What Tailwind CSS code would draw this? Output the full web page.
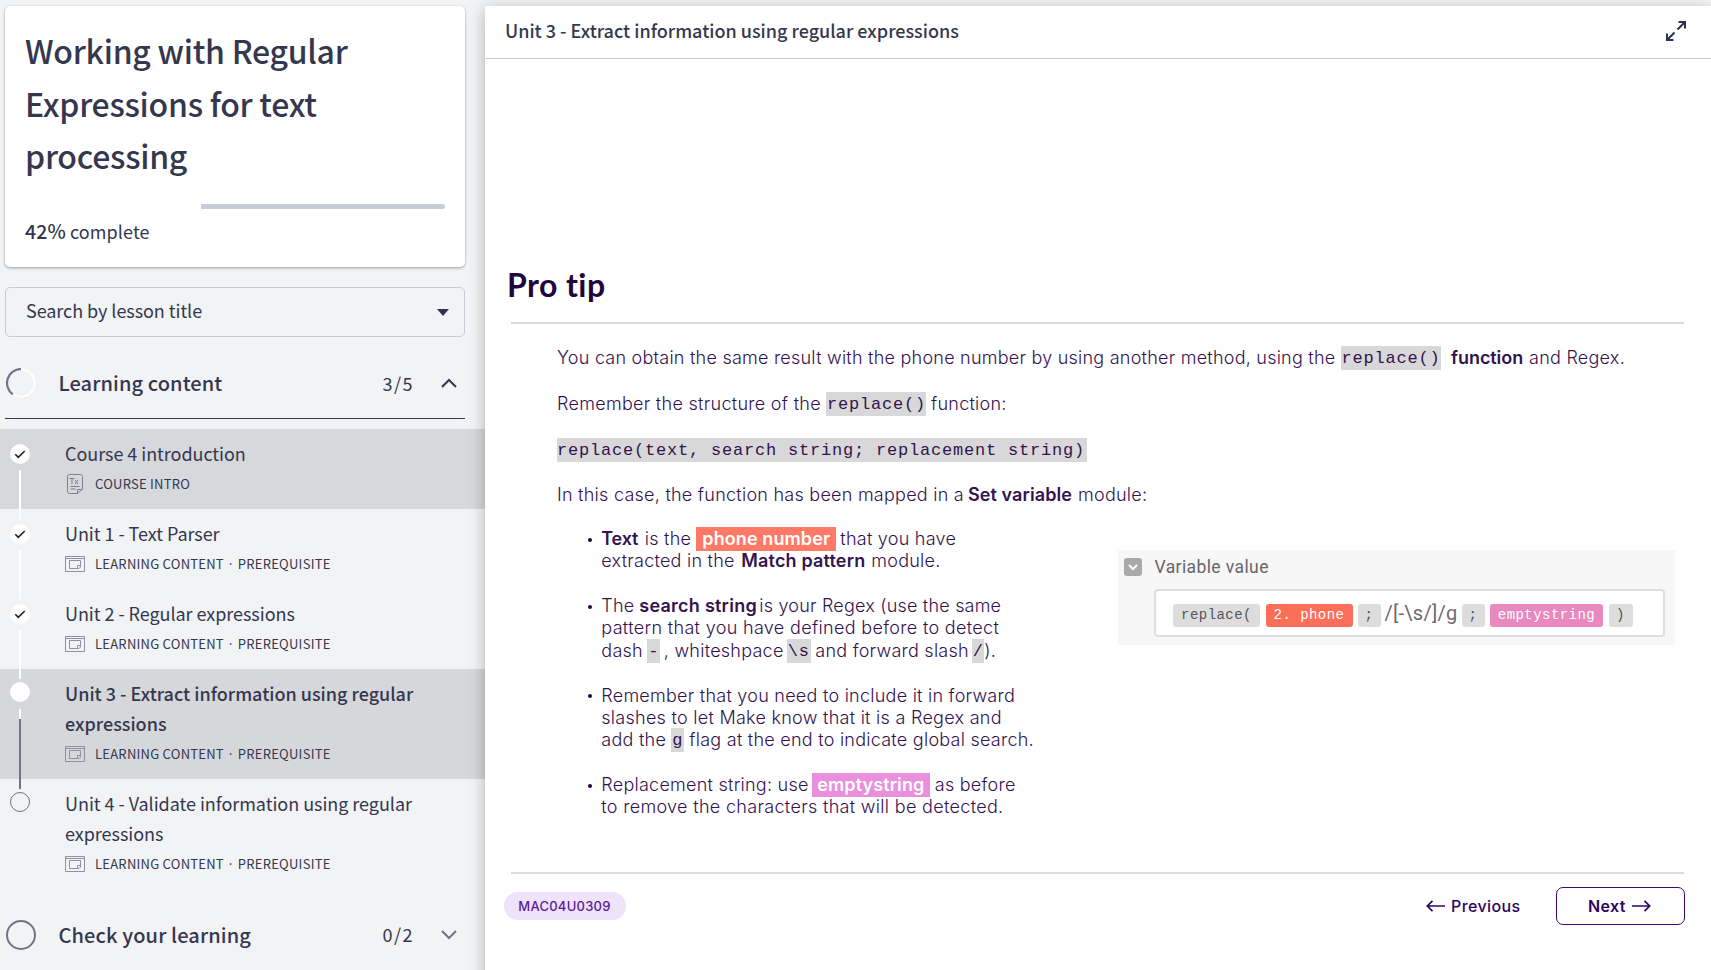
<!DOCTYPE html>
<html lang="en">
<head>
<meta charset="utf-8">
<title>Working with Regular Expressions for text processing</title>
<script src="https://cdn.jsdelivr.net/npm/@tailwindcss/browser@4"></script>
</head>
<body class="h-[970px] w-[1711px] overflow-hidden bg-[#f1f3f5] font-['Noto_Sans_CJK_JP',sans-serif] text-[#35374f]">
<svg class="hidden">
  <symbol id="lesson" viewBox="0 0 20 16"><g fill="none" stroke="#8e90a5"><path d="M.5.5h19v15H.5zM.5 2.5h19"/><path d="M12.500 12.500h-8v-8h11v5.500M12.500 12.500h1.500L15.500 11v-1.500h-3v3"/></g></symbol>
</svg>
<div class="flex h-full">
  <aside class="flex w-[485px] shrink-0 flex-col pt-1.5">
    <section class="ml-[5px] h-[261px] w-[460px] shrink-0 rounded-[5px] bg-white px-5 pt-[18px] shadow-[0_1px_3px_rgba(0,0,0,0.35)]">
      <h1 class="text-[32px] leading-[52.5px] font-medium tracking-[-0.27px] whitespace-nowrap">Working with Regular<br>Expressions for text<br>processing</h1>
      <div class="mt-[22.500px] h-[5px] pl-[176px]"><div class="h-full w-[244px] rounded-r-[3px] bg-[#c9cbd6]"></div></div>
      <p class="mt-[7px] text-[18px] leading-[30px] tracking-[0.1px]"><span class="text-[19.5px] font-medium">42%</span> complete</p>
    </section>
    <div class="mt-5 ml-[5px] flex h-[50px] w-[460px] shrink-0 items-center justify-between rounded-[5px] border border-[#c9cbd9] pr-[15px] pl-5">
      <span class="pb-[4px] text-[18px] leading-[30px] tracking-[-0.06px]">Search by lesson title</span>
      <svg class="h-[7px] w-3" viewBox="0 0 12 7"><path d="M0 0h12L6 7z" fill="#2f3150"/></svg>
    </div>
    <div class="ml-[5px] flex h-[82px] w-[460px] shrink-0 items-center border-b border-[#35375a] pt-[11px]">
      <svg class="ml-[1px] h-[30px] w-[30px]" viewBox="0 0 30 30" fill="none"><circle cx="15" cy="15" r="14.500" stroke="#c9cbd3" stroke-width=".8" stroke-dasharray="2 1.500"/><circle cx="15" cy="15" r="13.800" stroke="#fff" stroke-width="2.200"/><path d="M15 1A14 14 0 0 0 6.800 26.300" stroke="#6f7388" stroke-width="2.200"/></svg>
      <h2 class="ml-[22.500px] w-[324px] pb-[1px] text-[20px] leading-[30px] font-medium tracking-[0.1px]">Learning content</h2>
      <span class="w-[58px] pb-[1px] text-[18px] leading-[30px] tracking-[1.500px]">3/5</span>
      <svg class="h-2.5 w-4" viewBox="0 0 16 10" fill="none" stroke="#35374f" stroke-width="2"><path d="M1 9 8 2l7 7"/></svg>
    </div>
    <ul class="mt-2.5 text-[18px] leading-[30px]">
      <li class="relative z-50 flex h-20 bg-[#d6d8db] pt-[9px]">
        <div class="ml-2.5 w-[55px] shrink-0 pt-1.5"><svg class="h-5 w-5" viewBox="0 0 20 20"><circle cx="10" cy="10" r="10" fill="#fff"/><path d="m5.300 10.300 3 3L14.700 7" fill="none" stroke="#222" stroke-width="1.600"/></svg></div>
        <i class="absolute top-[41px] left-[19px] h-[49px] w-0.5 bg-white"></i>
        <div><p class="tracking-[-0.05px]">Course 4 introduction</p>
        <div class="mt-[6px] flex h-5 items-center text-[13px] tracking-[0.25px]"><svg class="ml-0.5 h-5 w-4" viewBox="0 0 16 20" fill="none" stroke="#7b8096"><path d="M10.500 19.500h-8a2 2 0 0 1-2-2v-15a2 2 0 0 1 2-2h11a2 2 0 0 1 2 2v12.500zM10.500 19.500v-4h5M2.500 4.500h5M5 4.500V10M8 6l3 4M11 6 8 10M3.500 12.500h9M3.500 15h5"/></svg><span class="ml-3">COURSE INTRO</span></div></div>
      </li>
      <li class="relative z-40 flex h-20 pt-[9px]">
        <div class="ml-2.5 w-[55px] shrink-0 pt-1.5"><svg class="h-5 w-5" viewBox="0 0 20 20"><circle cx="10" cy="10" r="10" fill="#fff"/><path d="m5.300 10.300 3 3L14.700 7" fill="none" stroke="#222" stroke-width="1.600"/></svg></div>
        <i class="absolute top-[41px] left-[19px] h-[49px] w-0.5 bg-white"></i>
        <div><p class="tracking-[-0.05px]">Unit 1 - Text Parser</p>
        <div class="mt-[6px] flex h-5 items-center text-[13px] tracking-[0.25px]"><svg class="h-4 w-5"><use href="#lesson"/></svg><span class="ml-2.5">LEARNING CONTENT · PREREQUISITE</span></div></div>
      </li>
      <li class="relative z-30 flex h-20 pt-[9px]">
        <div class="ml-2.5 w-[55px] shrink-0 pt-1.5"><svg class="h-5 w-5" viewBox="0 0 20 20"><circle cx="10" cy="10" r="10" fill="#fff"/><path d="m5.300 10.300 3 3L14.700 7" fill="none" stroke="#222" stroke-width="1.600"/></svg></div>
        <i class="absolute top-[41px] left-[19px] h-[49px] w-0.5 bg-white"></i>
        <div><p class="tracking-[-0.05px]">Unit 2 - Regular expressions</p>
        <div class="mt-[6px] flex h-5 items-center text-[13px] tracking-[0.25px]"><svg class="h-4 w-5"><use href="#lesson"/></svg><span class="ml-2.5">LEARNING CONTENT · PREREQUISITE</span></div></div>
      </li>
      <li class="relative z-20 flex h-[110px] bg-[#d6d7db] pt-[9px]">
        <div class="ml-2.5 w-[55px] shrink-0 pt-1"><div class="h-5 w-5 rounded-full bg-white"></div></div>
        <i class="absolute top-[40px] left-[19px] h-[80px] w-0.5 border-t-[10px] border-white bg-[#6f7388]"></i>
        <div><p class="font-medium whitespace-nowrap">Unit 3 - Extract information using regular<br>expressions</p>
        <div class="mt-[6px] flex h-5 items-center text-[13px] tracking-[0.25px]"><svg class="h-4 w-5"><use href="#lesson"/></svg><span class="ml-2.5">LEARNING CONTENT · PREREQUISITE</span></div></div>
      </li>
      <li class="flex h-[110px] pt-[9px]">
        <div class="ml-2.5 w-[55px] shrink-0 pt-1"><div class="h-5 w-5 rounded-full border border-[#6f7388]"></div></div>
        <div><p class="tracking-[-0.04px] whitespace-nowrap">Unit 4 - Validate information using regular<br>expressions</p>
        <div class="mt-[6px] flex h-5 items-center text-[13px] tracking-[0.25px]"><svg class="h-4 w-5"><use href="#lesson"/></svg><span class="ml-2.5">LEARNING CONTENT · PREREQUISITE</span></div></div>
      </li>
    </ul>
    <div class="ml-[5px] flex h-[92px] w-[460px] shrink-0 items-center">
      <div class="ml-[1px] h-[30px] w-[30px] shrink-0 rounded-full border-2 border-[#6f7388]"></div>
      <h2 class="ml-[22.500px] w-[324px] pb-[1px] text-[20px] leading-[30px] font-medium tracking-[0.13px]">Check your learning</h2>
      <span class="w-[58px] pb-[2px] text-[18px] leading-[30px] tracking-[1.500px]">0/2</span>
      <svg class="h-2.5 w-4" viewBox="0 0 16 10" fill="none" stroke="#6f7388" stroke-width="2"><path d="m1 1 7 7 7-7"/></svg>
    </div>
  </aside>

  <main class="relative z-[60] mt-1.5 flex h-[980px] w-[1226px] shrink-0 flex-col bg-white shadow-[0_4px_15px_rgba(0,0,0,0.28)]">
    <header class="flex h-[53px] shrink-0 items-center justify-between border-b border-[#c9cbd9] pr-[25px] pl-5">
      <span class="pb-[5px] text-[18px] leading-[30px] font-medium">Unit 3 - Extract information using regular expressions</span>
      <svg class="mb-[3px] h-5 w-5" viewBox="0 0 20 20" fill="none" stroke="#2f3150" stroke-width="2"><path d="M12.500 1H19v6.500M19 1l-7.500 7.500M7.500 19H1v-6.500M1 19l7.500-7.500"/></svg>
    </header>
    <article class="flex flex-col font-[Inter,sans-serif] text-[18px] leading-[22.33px] font-light tracking-[0.25px] text-[#33124f]">
      <h1 class="mt-[206px] ml-[22px] font-[Lato,sans-serif] text-[32px] leading-[40px] font-bold tracking-[0.45px] text-[#22053d] [font-variant-ligatures:none]">Pro tip</h1>
      <div class="mt-[17px] ml-[26px] h-0.5 w-[1173px] bg-[#dfd9dc]"></div>
      <div class="mt-[22px] ml-[72px] flex h-6 items-center whitespace-nowrap">
        <span class="w-[783.500px] tracking-[0.235px]">You can obtain the same result with the phone number by using another method, using the</span>
        <code class="mr-[10.500px] h-6 w-[100px] bg-[#d8d8d8] pl-[1px] font-['Liberation_Mono',monospace] text-[17px] leading-[26px] font-normal tracking-[0.8px]">replace()</code>
        <b class="w-[78px] font-semibold tracking-[-0.05px]">function</b><span>and Regex.</span>
      </div>
      <div class="mt-[22px] ml-[72px] flex h-6 items-center whitespace-nowrap">
        <span class="w-[269px] tracking-[0.29px]">Remember the structure of the</span>
        <code class="mr-[5px] h-6 w-[100px] bg-[#d8d8d8] pl-[1px] font-['Liberation_Mono',monospace] text-[17px] leading-[26px] font-normal tracking-[0.8px]">replace()</code>
        <span>function:</span>
      </div>
      <code class="mt-[22px] ml-[72px] h-6 w-[530px] bg-[#d8d8d8] font-['Liberation_Mono',monospace] text-[17px] leading-[26px] font-normal tracking-[0.8px] whitespace-nowrap">replace(text, search string; replacement string)</code>
      <div class="mt-[21px] ml-[72px] flex h-6 items-center whitespace-nowrap">
        <span class="w-[411px]">In this case, the function has been mapped in a</span><b class="w-[110px] font-semibold tracking-[0.09px]">Set variable</b><span>module:</span>
      </div>
      <div class="mt-[21px] flex">
        <ul class="ml-[103px] w-[530px] [&_li]:relative [&_li]:mb-[22.33px] [&_li]:pl-[13.3px] [&_p]:flex [&_p]:h-[22.33px] [&_p]:items-center [&_p]:whitespace-nowrap">
          <li><i class="absolute top-[10px] left-0 h-1 w-1 rounded-full bg-[#22053d]"></i>
            <p><b class="w-[43.500px] font-semibold tracking-[-0.2px]">Text</b><span class="w-[51.500px]">is the</span><mark class="mr-1 h-6 w-[140px] bg-[#ff7a66] pl-1.5 leading-6 font-semibold tracking-[0.1px] text-white">phone number</mark><span>that you have</span></p>
            <p><span class="w-[140px]">extracted in the</span><b class="w-[130px] font-semibold tracking-[0.17px]">Match pattern</b><span>module.</span></p></li>
          <li><i class="absolute top-[10px] left-0 h-1 w-1 rounded-full bg-[#22053d]"></i>
            <p><span class="w-[38px]">The</span><b class="w-[120px] font-semibold">search string</b><span class="tracking-[0.2px]">is your Regex (use the same</span></p>
            <p class="tracking-[0.33px]">pattern that you have defined before to detect</p>
            <p><span class="w-[46px]">dash</span><code class="mr-[4px] h-6 w-[12.500px] bg-[#d8d8d8] pl-[1px] font-['Liberation_Mono',monospace] text-[17px] leading-[26px] font-normal">-</code><span class="w-[123px]">, whiteshpace</span><code class="mr-[4.500px] h-6 w-6 bg-[#d8d8d8] pl-[1px] font-['Liberation_Mono',monospace] text-[17px] leading-[26px] font-normal tracking-[0.8px]">\s</code><span class="w-[156.500px] tracking-[0.25px]">and forward slash</span><code class="h-6 w-[12.500px] bg-[#d8d8d8] pl-[1px] font-['Liberation_Mono',monospace] text-[17px] leading-[26px] font-normal">/</code><span>).</span></p></li>
          <li><i class="absolute top-[10px] left-0 h-1 w-1 rounded-full bg-[#22053d]"></i>
            <p class="pt-[1px]">Remember that you need to include it in forward</p>
            <p class="tracking-[0.27px]">slashes to let Make know that it is a Regex and</p>
            <p><span class="w-[70px]">add the</span><code class="mr-[5px] h-6 w-[13px] bg-[#d8d8d8] pl-[1px] font-['Liberation_Mono',monospace] text-[17px] leading-[26px] font-normal">g</code><span>flag at the end to indicate global search.</span></p></li>
          <li><i class="absolute top-[10px] left-0 h-1 w-1 rounded-full bg-[#22053d]"></i>
            <p><span class="w-[211px]">Replacement string: use</span><mark class="mr-[5px] h-6 w-[117.500px] bg-[#ea8fdc] pl-[5px] leading-6 font-semibold tracking-[0.1px] text-white">emptystring</mark><span>as before</span></p>
            <p class="tracking-[0.32px]">to remove the characters that will be detected.</p></li>
        </ul>
        <div class="mt-[22px] h-[95px] w-[557px] bg-[#f7f7f7] font-[Roboto,sans-serif] font-normal tracking-normal whitespace-nowrap text-[#666]">
          <div class="flex h-[34px] items-center pl-1.5">
            <svg class="h-[18px] w-[18px]" viewBox="0 0 18 18"><rect width="18" height="18" rx="3" fill="#a9a9a9"/><path d="m5 7 4 4 4-4" fill="none" stroke="#fff" stroke-width="2"/></svg>
            <span class="ml-[12.500px] text-[17.500px] tracking-[0.4px]">Variable value</span>
          </div>
          <div class="mt-[5px] ml-[36px] flex h-12 w-[511px] items-center rounded-[4px] border-2 border-[#dedede] bg-white pt-[4px] pl-[17px] font-['Liberation_Mono',monospace] text-[14px] tracking-[0.45px] text-[#555] [&>span]:h-[23px] [&>span]:shrink-0 [&>span]:rounded-[3px] [&>span]:text-center [&>span]:leading-[22px]">
            <span class="w-[87px] bg-[#dddddd]">replace(</span>
            <span class="ml-[5.500px] w-[87px] bg-[#fb6e57] text-white">2. phone</span>
            <span class="ml-[5px] w-[23px] bg-[#dddddd]">;</span>
            <em class="ml-1 w-[73px] pb-1 font-[Roboto,sans-serif] text-[20px] tracking-[0.26px] text-[#6b6b70] not-italic">/[-\s/]/g</em>
            <span class="ml-1 w-[23px] bg-[#dddddd]">;</span>
            <span class="ml-[5.500px] w-[113px] bg-[#ea88c0] text-white">emptystring</span>
            <span class="ml-[5.500px] w-6 bg-[#dddddd]">)</span>
          </div>
        </div>
      </div>
    </article>
    <footer class="mt-[31px] ml-[19px] w-[1181px] font-[Inter,sans-serif] text-[#2c0560]">
      <div class="ml-[7px] h-0.5 w-[1173px] bg-[#dfd9dc]"></div>
      <div class="mt-[13.500px] flex h-[38px] items-center">
        <span class="flex h-[28px] w-[122px] items-center justify-center rounded-full bg-[#efe2fb] pt-[1px] pr-[1px] text-[13px] font-medium tracking-[0.25px] text-[#5c1a99]">MAC04U0309</span>
        <div class="ml-[800px] flex w-[130px] items-center"><svg class="h-3 w-[19px]" viewBox="0 0 19 12" fill="none" stroke="currentColor" stroke-width="1.700"><path d="M19 6H1.500M6.500.800 1.300 6l5.200 5.200"/></svg><span class="ml-1.5 text-[16px] leading-5 font-medium tracking-[0.4px]">Previous</span></div>
        <div class="flex h-[38px] w-[129px] items-center rounded-[7px] border-[1.500px] border-[#3a0d6b] pl-[31px]"><span class="w-[43.500px] text-[16px] leading-5 font-semibold tracking-[0.4px]">Next</span><svg class="h-3 w-[19px]" viewBox="0 0 19 12" fill="none" stroke="currentColor" stroke-width="1.700"><path d="M0 6h17.500M12.500.800 17.700 6l-5.200 5.200"/></svg></div>
      </div>
    </footer>
  </main>
</div>
</body>
</html>
